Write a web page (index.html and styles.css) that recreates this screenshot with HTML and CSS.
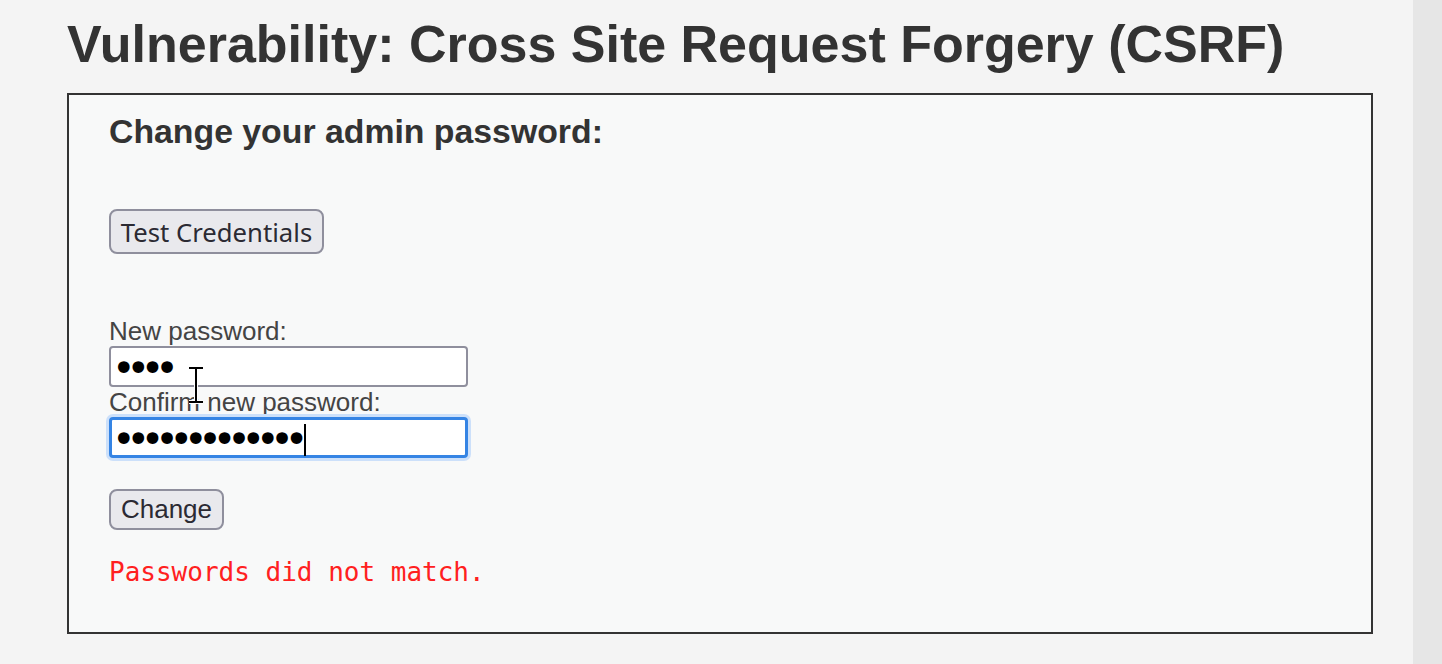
FILE: index.html
```html
<!DOCTYPE html>
<html lang="en">
<head>
<meta charset="utf-8">
<title>Vulnerability: Cross Site Request Forgery (CSRF)</title>
<link rel="stylesheet" href="styles.css">
</head>
<body>
<div class="page">
  <main class="main">
    <h1 class="title">Vulnerability: Cross Site Request Forgery (CSRF)</h1>
    <div class="area">
      <h3 class="subtitle">Change your admin password:</h3>
      <button type="button" class="btn btn-test">Test Credentials</button>
      <form class="form">
        <label class="label" for="pw-new">New password:</label>
        <input id="pw-new" class="field" type="password" value="abcd">
        <label class="label" for="pw-conf">Confirm new password:</label>
        <div class="field-wrap">
          <input id="pw-conf" class="field field-focus" type="password" value="abcdefghijklm">
          <span class="caret"></span>
        </div>
        <button type="button" class="btn btn-change">Change</button>
      </form>
      <pre class="error">Passwords did not match.</pre>
    </div>
  </main>
  <aside class="rail"></aside>
  <svg class="ibeam" width="20" height="40" viewBox="0 0 20 40">
    <path d="M3 2h14M10 2v34M3 36h14" fill="none" stroke="#fff" stroke-width="4"/>
    <path d="M3 2h14M10 2v34M3 36h14" fill="none" stroke="#000" stroke-width="2"/>
  </svg>
</div>
</body>
</html>
```

FILE: styles.css
```css
html, body {
  margin: 0;
  padding: 0;
  background: #f4f4f4;
}
.page {
  position: relative;
  display: flex;
  width: 1442px;
  height: 664px;
  overflow: hidden;
}
.main {
  flex: 1;
  padding: 15px 0 0 67px;
}
.rail {
  width: 29px;
  background: #e6e6e6;
}
.title {
  margin: 0 0 20px;
  font-family: "Liberation Sans", Arial, sans-serif;
  font-weight: bold;
  font-size: 52px;
  line-height: 58px;
  color: #333;
}
.area {
  width: 1306px;
  height: 541px;
  box-sizing: border-box;
  border: 2px solid #333;
  background: #f8f9f9;
  padding: 17px 40px 0;
}
.subtitle {
  margin: 0;
  font-family: "Liberation Sans", Arial, sans-serif;
  font-weight: bold;
  font-size: 33.8px;
  line-height: 39px;
  color: #333;
}
.btn {
  display: block;
  box-sizing: border-box;
  margin: 0;
  padding: 0;
  background: #e9e9ed;
  border: 2px solid #8f8f9d;
  border-radius: 8px;
  color: #2b2a33;
}
.btn-test {
  margin-top: 58px;
  width: 215px;
  height: 45px;
  font-family: "Noto Sans", sans-serif;
  font-size: 25.7px;
  padding-top: 2px;
}
.form {
  display: flex;
  flex-direction: column;
  align-items: flex-start;
  margin-top: 62px;
}
.label {
  font-family: "Liberation Sans", Arial, sans-serif;
  font-size: 26px;
  line-height: 30px;
  color: #444;
}
.field-wrap {
  position: relative;
}
.field {
  box-sizing: border-box;
  width: 359px;
  height: 41px;
  margin: 0;
  padding: 2px 0 0 1px;
  border: 2px solid #8f8f9d;
  border-radius: 4px;
  background: #fff;
  font-family: "DejaVu Sans", sans-serif;
  font-size: 40px;
  line-height: 1;
  letter-spacing: -9.2px;
  color: #000;
  outline: none;
}
.field-focus {
  border: 3px solid #3584e4;
  box-shadow: 0 0 0 3px #cce0fa;
  padding-left: 0;
}
.caret {
  position: absolute;
  left: 195px;
  top: 7px;
  width: 2px;
  height: 32px;
  background: #000;
}
.btn-change {
  margin-top: 31px;
  width: 115px;
  height: 41px;
  font-family: "Liberation Sans", Arial, sans-serif;
  font-size: 26px;
}
.error {
  margin: 27px 0 0;
  font-family: "DejaVu Sans Mono", monospace;
  font-size: 26px;
  line-height: 30px;
  color: #ff2020;
}
.ibeam {
  position: absolute;
  left: 186px;
  top: 366px;
}
```
